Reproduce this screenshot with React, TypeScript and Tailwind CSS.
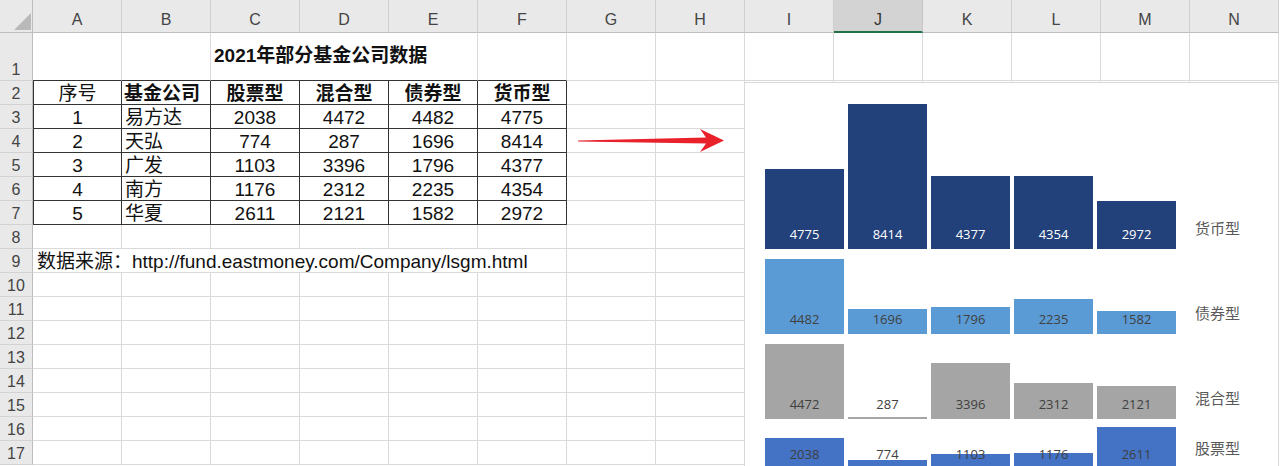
import React from 'react';

const cols = ['A', 'B', 'C', 'D', 'E', 'F', 'G', 'H', 'I', 'J', 'K', 'L', 'M', 'N'];

// 2021 fund company data
const funds = [
  { no: '1', name: '易方达', stock: 2038, mixed: 4472, bond: 4482, money: 4775 },
  { no: '2', name: '天弘', stock: 774, mixed: 287, bond: 1696, money: 8414 },
  { no: '3', name: '广发', stock: 1103, mixed: 3396, bond: 1796, money: 4377 },
  { no: '4', name: '南方', stock: 1176, mixed: 2312, bond: 2235, money: 4354 },
  { no: '5', name: '华夏', stock: 2611, mixed: 2121, bond: 1582, money: 2972 },
];

// chart panels, top to bottom
const series = [
  { key: 'money', label: '货币型', bar: 'bg-[#22407a]', text: 'text-white', row: 'h-[166px]' },
  { key: 'bond', label: '债券型', bar: 'bg-[#5b9bd5]', text: 'text-[#404040]', row: 'h-[85px]' },
  { key: 'mixed', label: '混合型', bar: 'bg-[#a5a5a5]', text: 'text-[#404040]', row: 'h-[85px]' },
  { key: 'stock', label: '股票型', bar: 'bg-[#4472c4]', text: 'text-[#404040]', row: 'h-[50px]' },
] as const;

const grid = 'border-r border-b border-r-[#dadada] border-b-[#dadada]';
const tbl = 'border-r border-b border-r-[#333] border-b-[#333]';
const cellText = 'flex items-end text-[19px] leading-[20px] text-[#111]';

function RowHead({ n }: { n: number }) {
  return (
    <div className="flex items-end justify-center bg-[#e9e9e9] border-r border-b border-r-[#bdbdbd] border-b-[#d2d2d2] text-[16px] leading-[20px] text-[#444]">
      {n}
    </div>
  );
}

function Blank({ count }: { count: number }) {
  return (
    <>
      {Array.from({ length: count }).map((_, i) => (
        <div key={i} className={grid} />
      ))}
    </>
  );
}

function Chart() {
  return (
    <div className="absolute left-[744px] top-[82px] w-[535px] h-[420px] border border-[#d9d9d9] bg-white pl-[20px] flex flex-col">
      {series.map((s) => (
        <div key={s.key} className={`flex shrink-0 ${s.row}`}>
          <div className="flex items-end gap-[4px]">
            {funds.map((f) => {
              const v = f[s.key];
              const h = Math.max(2, Math.round(v * 0.01782 - 5));
              return (
                <div key={f.no} className="relative w-[79px] h-full flex items-end">
                  <div className={`w-full ${s.bar}`} style={{ height: h }} />
                  <div className={`absolute inset-x-0 bottom-[7px] text-center text-[13px] leading-[16px] font-['Open_Sans',sans-serif] ${s.text}`}>
                    {v}
                  </div>
                </div>
              );
            })}
          </div>
          <div className="ml-[19px] flex items-end pb-[12px] text-[15px] leading-[18px] text-[#595959] font-['Noto_Sans_CJK_SC',sans-serif]">
            {s.label}
          </div>
        </div>
      ))}
    </div>
  );
}

function Arrow() {
  return (
    <svg className="absolute left-[570px] top-[120px]" width="160" height="40" viewBox="0 0 160 40">
      <polygon
        points="8,20.4 136,17.6 130,9 154,20.5 130,32 136,23.6 8,21.6"
        fill="#e8212b"
      />
    </svg>
  );
}

export default function App() {
  return (
    <div className="relative w-[1280px] h-[466px] overflow-hidden bg-white font-['Liberation_Sans','Noto_Sans_CJK_SC',sans-serif]">
      <div className="grid grid-cols-[33px_repeat(14,89px)] grid-rows-[33px_48px_repeat(16,24px)]">
        {/* Column headers */}
        <div className="relative bg-[#e9e9e9] border-r border-b border-r-[#bdbdbd] border-b-[#bdbdbd]">
          <svg className="absolute left-[14px] top-[13px]" width="17" height="17" viewBox="0 0 17 17">
            <polygon points="17,0 17,17 0,17" fill="#b9b9b9" />
          </svg>
        </div>
        {cols.map((c) =>
          c === 'J' ? (
            <div key={c} className="flex items-end justify-center pb-[1px] bg-[#d3d3d3] border-r border-b-2 border-r-[#c6c6c6] border-b-[#217346] text-[16px] leading-[20px] text-[#333]">
              {c}
            </div>
          ) : (
            <div key={c} className="flex items-end justify-center pb-[2px] bg-[#e9e9e9] border-r border-b border-r-[#cfcfcf] border-b-[#bdbdbd] text-[16px] leading-[20px] text-[#444]">
              {c}
            </div>
          )
        )}

        {/* Row 1: title */}
        <RowHead n={1} />
        <div className="border-r border-b border-r-[#dadada] border-b-[#333]" />
        <div className="border-r border-b border-r-[#dadada] border-b-[#333]" />
        <div className="col-span-3 flex items-center pl-[3px] border-r border-b border-r-[#dadada] border-b-[#333] text-[19px] font-bold text-[#111] whitespace-nowrap">
          2021年部分基金公司数据
        </div>
        <div className="border-r border-b border-r-[#dadada] border-b-[#333]" />
        <Blank count={8} />

        {/* Row 2: table header */}
        <RowHead n={2} />
        <div className={`${tbl} ${cellText} justify-center border-l border-l-[#333]`}>序号</div>
        <div className={`${tbl} ${cellText} pl-[2px] font-bold`}>基金公司</div>
        <div className={`${tbl} ${cellText} justify-center font-bold`}>股票型</div>
        <div className={`${tbl} ${cellText} justify-center font-bold`}>混合型</div>
        <div className={`${tbl} ${cellText} justify-center font-bold`}>债券型</div>
        <div className={`${tbl} ${cellText} justify-center font-bold`}>货币型</div>
        <Blank count={8} />

        {/* Rows 3-7: data */}
        {funds.map((f, i) => (
          <React.Fragment key={f.no}>
            <RowHead n={i + 3} />
            <div className={`${tbl} ${cellText} justify-center border-l border-l-[#333]`}>{f.no}</div>
            <div className={`${tbl} ${cellText} pl-[3px]`}>{f.name}</div>
            <div className={`${tbl} ${cellText} justify-center`}>{f.stock}</div>
            <div className={`${tbl} ${cellText} justify-center`}>{f.mixed}</div>
            <div className={`${tbl} ${cellText} justify-center`}>{f.bond}</div>
            <div className={`${tbl} ${cellText} justify-center`}>{f.money}</div>
            <Blank count={8} />
          </React.Fragment>
        ))}

        {/* Row 8 */}
        <RowHead n={8} />
        <Blank count={14} />

        {/* Row 9: source */}
        <RowHead n={9} />
        <div className={`col-span-6 ${grid} ${cellText} pl-[4px] whitespace-nowrap`}>
          数据来源：http://fund.eastmoney.com/Company/lsgm.html
        </div>
        <Blank count={8} />

        {/* Rows 10-17 */}
        {[10, 11, 12, 13, 14, 15, 16, 17].map((n) => (
          <React.Fragment key={n}>
            <RowHead n={n} />
            <Blank count={14} />
          </React.Fragment>
        ))}
      </div>

      <Arrow />
      <Chart />
    </div>
  );
}
